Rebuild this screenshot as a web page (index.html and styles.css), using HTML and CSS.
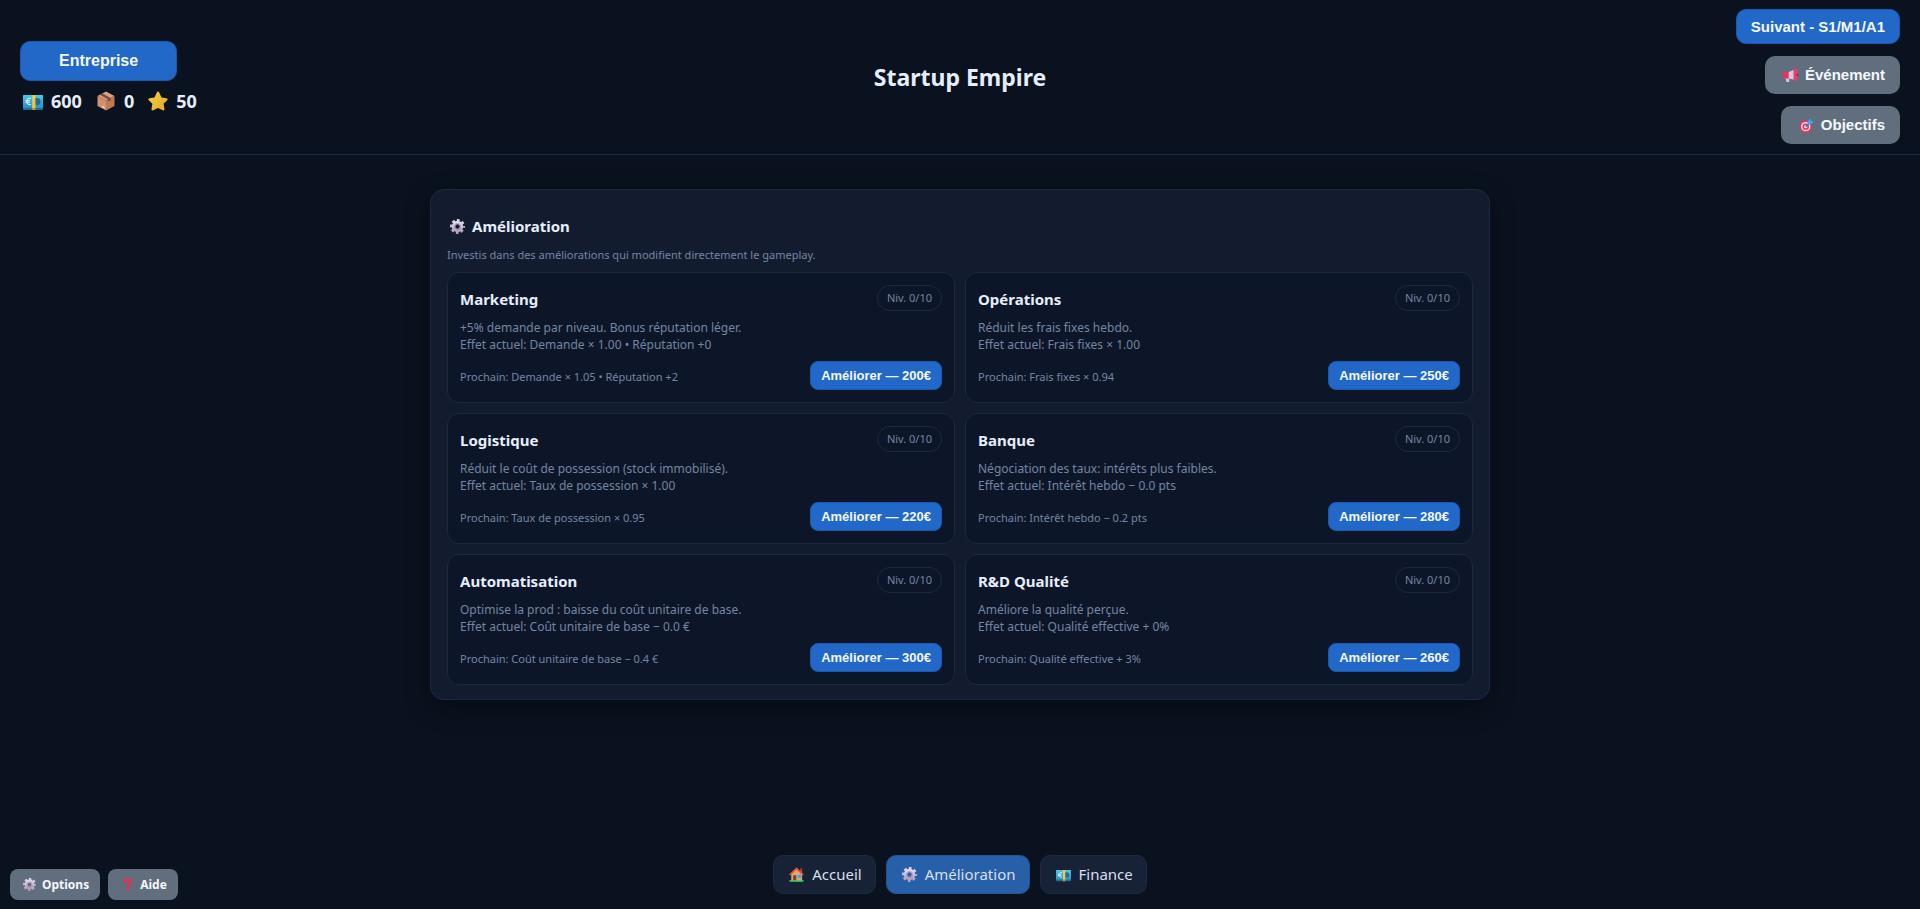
FILE: index.html
```html
<!DOCTYPE html>
<html lang="fr">
<head>
<meta charset="utf-8">
<meta name="viewport" content="width=device-width, initial-scale=1">
<title>Startup Empire</title>
<link rel="stylesheet" href="styles.css">
</head>
<body>
<svg class="sprite" aria-hidden="true">
  <defs>
    <linearGradient id="g-note" x1="0" y1="0" x2="0" y2="1"><stop offset="0" stop-color="#4cc8f2"/><stop offset="1" stop-color="#2393c8"/></linearGradient>
    <linearGradient id="g-gear" x1="0" y1="0" x2="0" y2="1"><stop offset="0" stop-color="#e2dbea"/><stop offset="1" stop-color="#b3a0c2"/></linearGradient>
    <linearGradient id="g-star" x1="0" y1="0" x2="1" y2="1"><stop offset="0" stop-color="#f4d03c"/><stop offset="1" stop-color="#e3a82c"/></linearGradient>
    <symbol id="i-note" viewBox="0 0 20 20">
      <rect x="0" y="4" width="20" height="15" rx="1" fill="#1e6f94"/>
      <rect x="0" y="4" width="20" height="13" rx="1" fill="url(#g-note)"/>
      <circle cx="14" cy="10.500" r="3.600" fill="#226b98"/>
      <path d="M8 7.500A3.200 3.200 0 1 0 8 13.500M2.500 9.700h4.500M2.500 11.300h4.500" fill="none" stroke="#d9f3fb" stroke-width="1.100"/>
      <path d="M9.200 4h3.200v13H9.200z" fill="#ffc531"/><path d="M9.200 17h3.200v2H9.200z" fill="#d98a20"/>
    </symbol>
    <symbol id="i-box" viewBox="0 0 20 20">
      <path d="M10 .5 18.500 5 10 9.500 1.500 5z" fill="#dba27c"/>
      <path d="M1.500 5 10 9.500V19.500L1.500 15z" fill="#d0906b"/>
      <path d="M18.500 5 10 9.500V19.500L18.500 15z" fill="#bd7955"/>
      <path d="M3.800 3.800 12 8.400v2.200l2.700-1.400V7L6.500 2.400z" fill="#7d4c3c"/>
      <path d="M6 14.500l2.700 1.400v1.500L6 16z" fill="#eadcf0"/>
    </symbol>
    <symbol id="i-star" viewBox="0 0 20 20">
      <path d="M10 .6c.7 0 1 .6 1.300 1.200l2.200 4.700 5 .7c1.200.2 1.500 1.300.7 2.100l-3.600 3.500.9 5.200c.2 1.200-.8 1.700-1.800 1.200L10 16.900l-4.700 2.300c-1 .5-2-.1-1.800-1.200l.9-5.200L.8 9.300c-.8-.8-.5-1.900.7-2.100l5-.7 2.200-4.700c.3-.6.6-1.200 1.300-1.200z" fill="url(#g-star)"/>
    </symbol>
    <symbol id="i-gear" viewBox="0 0 20 20">
      <g fill="none" stroke="url(#g-gear)">
        <circle cx="10" cy="10" r="5.300" stroke-width="4.600"/>
        <circle cx="10" cy="10" r="8.300" stroke-width="3.300" stroke-dasharray="3.659 2.860" stroke-dashoffset="1.830"/>
      </g>
      <circle cx="10" cy="10" r="4.200" fill="none" stroke="#8d7b9f" stroke-width=".7"/>
    </symbol>
    <symbol id="i-horn" viewBox="0 0 20 20">
      <path d="M3 12h5l.5 6.500H4.500z" fill="#cfc4dc"/>
      <path d="M7 5.500 16 2v14l-9-2.500z" fill="#d5c9df"/>
      <path d="M1.500 5h6v9h-6Q.3 14 .3 12.800V6.200Q.3 5 1.500 5z" fill="#ef2f62"/>
      <path d="M14 1.500q4-1.500 5 0v15q-1 1.500-5 0z" fill="#f5386c"/>
      <path d="M19 8v3" stroke="#7d2340" stroke-width="1.400"/>
    </symbol>
    <symbol id="i-target" viewBox="0 0 20 20">
      <circle cx="9" cy="11.500" r="8.500" fill="#e8335f"/>
      <circle cx="9" cy="11.500" r="6.300" fill="#eadfee"/>
      <circle cx="9" cy="11.500" r="4.300" fill="#e8335f"/>
      <circle cx="9" cy="11.500" r="2.200" fill="#eadfee"/>
      <path d="M9 11.500 16 4.500" stroke="#1c7fc4" stroke-width="2"/>
      <path d="M11.500 4.500 15.500.3l.7 3.500 3.600.7-4.300 4h-4z" fill="#35a9ef"/>
    </symbol>
    <symbol id="i-house" viewBox="0 0 20 20">
      <path d="M15 2h2.500v6H15z" fill="#a8502f"/>
      <path d="M3 9 10 2.500 17.500 9v10H3z" fill="#dfa777"/>
      <path d="M1 10.500 10 1.800l9 8.700" fill="none" stroke="#e5512f" stroke-width="2.200"/>
      <path d="M5.500 11h4.300v8H5.500z" fill="#754337"/>
      <path d="M11.800 10.500h4.500v4.500h-4.500z" fill="#37a8ee"/>
      <path d="M.5 17.600h19v2H.5z" fill="#3bcf68"/>
    </symbol>
    <symbol id="i-help" viewBox="0 0 20 20">
      <path d="M5.800 6.200C6 3.300 8 2.200 10.200 2.200c2.700 0 4.500 1.500 4.500 3.700 0 3.500-4.200 3.600-4.200 8" fill="none" stroke="#f0294f" stroke-width="3.800" stroke-linecap="round"/>
      <circle cx="10.500" cy="18" r="2" fill="#f0294f"/>
    </symbol>
  </defs>
</svg>

<header class="topbar">
  <div class="company">
    <button class="btn btn-primary btn-company" type="button">Entreprise</button>
    <div class="stats">
      <span class="stat"><svg class="icon icon-lg"><use href="#i-note"/></svg>600</span>
      <span class="stat"><svg class="icon icon-lg"><use href="#i-box"/></svg>0</span>
      <span class="stat"><svg class="icon icon-lg"><use href="#i-star"/></svg>50</span>
    </div>
  </div>
  <h1 class="brand">Startup Empire</h1>
  <div class="actions">
    <button class="btn btn-primary btn-next" type="button">Suivant - S1/M1/A1</button>
    <button class="btn btn-muted" type="button"><svg class="icon"><use href="#i-horn"/></svg>Événement</button>
    <button class="btn btn-muted" type="button"><svg class="icon"><use href="#i-target"/></svg>Objectifs</button>
  </div>
</header>

<main class="panel">
  <h2 class="panel-title"><svg class="icon"><use href="#i-gear"/></svg>Amélioration</h2>
  <p class="panel-intro">Investis dans des améliorations qui modifient directement le gameplay.</p>
  <div class="cards">
    <article class="card">
      <div class="card-row"><h3 class="card-title">Marketing</h3><span class="badge">Niv. 0/10</span></div>
      <p class="card-text">+5% demande par niveau. Bonus réputation léger.<br>Effet actuel: Demande × 1.00 • Réputation +0</p>
      <div class="card-row"><span class="card-next">Prochain: Demande × 1.05 • Réputation +2</span><button class="btn btn-primary btn-upgrade" type="button">Améliorer — 200€</button></div>
    </article>
    <article class="card">
      <div class="card-row"><h3 class="card-title">Opérations</h3><span class="badge">Niv. 0/10</span></div>
      <p class="card-text">Réduit les frais fixes hebdo.<br>Effet actuel: Frais fixes × 1.00</p>
      <div class="card-row"><span class="card-next">Prochain: Frais fixes × 0.94</span><button class="btn btn-primary btn-upgrade" type="button">Améliorer — 250€</button></div>
    </article>
    <article class="card">
      <div class="card-row"><h3 class="card-title">Logistique</h3><span class="badge">Niv. 0/10</span></div>
      <p class="card-text">Réduit le coût de possession (stock immobilisé).<br>Effet actuel: Taux de possession × 1.00</p>
      <div class="card-row"><span class="card-next">Prochain: Taux de possession × 0.95</span><button class="btn btn-primary btn-upgrade" type="button">Améliorer — 220€</button></div>
    </article>
    <article class="card">
      <div class="card-row"><h3 class="card-title">Banque</h3><span class="badge">Niv. 0/10</span></div>
      <p class="card-text">Négociation des taux: intérêts plus faibles.<br>Effet actuel: Intérêt hebdo − 0.0 pts</p>
      <div class="card-row"><span class="card-next">Prochain: Intérêt hebdo − 0.2 pts</span><button class="btn btn-primary btn-upgrade" type="button">Améliorer — 280€</button></div>
    </article>
    <article class="card">
      <div class="card-row"><h3 class="card-title">Automatisation</h3><span class="badge">Niv. 0/10</span></div>
      <p class="card-text">Optimise la prod : baisse du coût unitaire de base.<br>Effet actuel: Coût unitaire de base − 0.0 €</p>
      <div class="card-row"><span class="card-next">Prochain: Coût unitaire de base − 0.4 €</span><button class="btn btn-primary btn-upgrade" type="button">Améliorer — 300€</button></div>
    </article>
    <article class="card">
      <div class="card-row"><h3 class="card-title">R&amp;D Qualité</h3><span class="badge">Niv. 0/10</span></div>
      <p class="card-text">Améliore la qualité perçue.<br>Effet actuel: Qualité effective + 0%</p>
      <div class="card-row"><span class="card-next">Prochain: Qualité effective + 3%</span><button class="btn btn-primary btn-upgrade" type="button">Améliorer — 260€</button></div>
    </article>
  </div>
</main>

<footer class="bottombar">
  <div class="tools">
    <button class="btn btn-muted btn-tool" type="button"><svg class="icon icon-sm"><use href="#i-gear"/></svg>Options</button>
    <button class="btn btn-muted btn-tool" type="button"><svg class="icon icon-sm"><use href="#i-help"/></svg>Aide</button>
  </div>
  <nav class="tabs">
    <button class="tab" type="button"><svg class="icon"><use href="#i-house"/></svg>Accueil</button>
    <button class="tab tab-active" type="button" aria-current="page"><svg class="icon"><use href="#i-gear"/></svg>Amélioration</button>
    <button class="tab" type="button"><svg class="icon"><use href="#i-note"/></svg>Finance</button>
  </nav>
</footer>
</body>
</html>
```

FILE: styles.css
```css
:root {
  --bg: #0a121f;
  --panel: #131c2f;
  --card: #0d1628;
  --line: #1b2943;
  --text: #e6edfb;
  --muted: #7585a3;
  --primary: #2168c8;
  --ui: "Segoe UI", "Noto Sans", sans-serif;
  --control: Arial, "Liberation Sans", sans-serif;
}

* { box-sizing: border-box; }

body {
  margin: 0;
  min-height: 100vh;
  display: flex;
  flex-direction: column;
  background: var(--bg);
  color: var(--text);
  font-family: var(--ui);
}

h1, h2, h3, p { margin: 0; }

.sprite { position: absolute; width: 0; height: 0; }

.icon { width: 15px; height: 15px; flex: none; }
.icon-lg { width: 20px; height: 20px; }
.icon-sm { width: 13px; height: 13px; }

.topbar {
  display: grid;
  grid-template-columns: 1fr auto 1fr;
  align-items: center;
  padding: 9px 20px 10px;
  border-bottom: 1px solid var(--line);
}

.company {
  display: flex;
  flex-direction: column;
  align-items: flex-start;
  gap: 8px;
}

.stats { display: flex; gap: 14px; padding-left: 3px; }

.stat {
  display: flex;
  align-items: center;
  gap: 8px;
  font-size: 18px;
  line-height: 24px;
  font-weight: 700;
}

.brand {
  font-size: 23px;
  line-height: 32px;
  font-weight: 700;
}

.actions {
  display: flex;
  flex-direction: column;
  align-items: flex-end;
  gap: 12px;
}

.btn {
  display: inline-flex;
  align-items: center;
  justify-content: center;
  gap: 7px;
  border: 1px solid transparent;
  border-radius: 10px;
  color: #f5f8fd;
  font-family: var(--control);
  font-size: 15px;
  line-height: 18px;
  font-weight: 700;
  white-space: nowrap;
  cursor: pointer;
}

.btn-primary { background: var(--primary); border-color: #1c59ac; }
.btn-company { padding: 10px 38px; font-size: 16px; }
.btn-next { padding: 8px 14px; line-height: 17px; }
.btn-muted { padding: 9px 14px 9px 17px; background: #616e7d; }
.btn-upgrade { padding: 5px 10px; border-radius: 8px; font-size: 13px; line-height: 17px; }

.btn-tool {
  gap: 6px;
  padding: 6px 10px 6px 12px;
  border-radius: 8px;
  font-family: var(--ui);
  font-size: 12px;
  line-height: 17px;
}

.panel {
  width: 100%;
  max-width: 1060px;
  margin: 34px auto 0;
  padding: 25px 16px 14px;
  background: var(--panel);
  border: 1px solid var(--line);
  border-radius: 14px;
  box-shadow: 0 8px 24px rgba(0, 0, 0, 0.35);
}

.panel-title {
  display: flex;
  align-items: center;
  gap: 7px;
  padding-left: 3px;
  font-size: 15px;
  line-height: 22px;
}

.panel-intro {
  margin: 9px 0 8px;
  color: var(--muted);
  font-size: 11px;
  line-height: 18px;
}

.cards {
  display: grid;
  grid-template-columns: repeat(auto-fit, minmax(400px, 1fr));
  gap: 10px;
}

.card {
  display: flex;
  flex-direction: column;
  padding: 12px;
  background: var(--card);
  border: 1px solid var(--line);
  border-radius: 12px;
}

.card-row {
  display: flex;
  align-items: center;
  justify-content: space-between;
  gap: 12px;
}

.card-title { font-size: 15px; line-height: 22px; padding-top: 2px; }

.badge {
  padding: 4px 9px;
  border: 1px solid var(--line);
  border-radius: 999px;
  color: var(--muted);
  font-size: 11px;
  line-height: 16px;
}

.card-text {
  margin: 8px 0;
  color: var(--muted);
  font-size: 12px;
  line-height: 17px;
}

.card-next { padding-top: 2px; color: var(--muted); font-size: 11px; line-height: 16px; }

.bottombar {
  margin-top: auto;
  display: grid;
  grid-template-columns: 1fr auto 1fr;
  align-items: end;
  padding: 0 10px 9px;
}

.tools { display: flex; gap: 8px; }

.tabs { display: flex; gap: 10px; padding-bottom: 6px; }

.tab {
  display: flex;
  align-items: center;
  gap: 8px;
  padding: 8px 13px 8px 15px;
  border: 1px solid #1b2942;
  border-radius: 10px;
  background: #182237;
  color: #d7dfee;
  font-family: var(--ui);
  font-size: 15px;
  line-height: 21px;
  cursor: pointer;
}

.tab-active { background: #285fa9; border-color: #245491; }
```
